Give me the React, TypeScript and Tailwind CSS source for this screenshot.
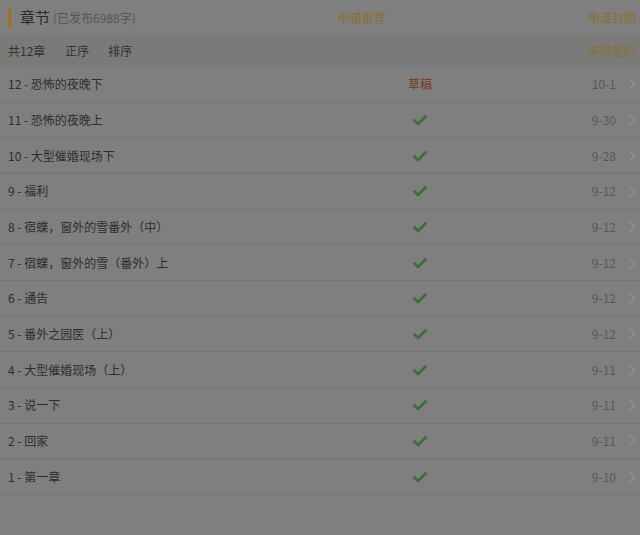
import React from "react";

const rows: { t: string; d: string; draft?: boolean }[] = [
  { t: "12 - 恐怖的夜晚下", d: "10-1", draft: true },
  { t: "11 - 恐怖的夜晚上", d: "9-30" },
  { t: "10 - 大型催婚现场下", d: "9-28" },
  { t: "9 - 福利", d: "9-12" },
  { t: "8 - 宿蝶，窗外的雪番外（中）", d: "9-12" },
  { t: "7 - 宿蝶，窗外的雪（番外）上", d: "9-12" },
  { t: "6 - 通告", d: "9-12" },
  { t: "5 - 番外之园医（上）", d: "9-12" },
  { t: "4 - 大型催婚现场（上）", d: "9-11" },
  { t: "3 - 说一下", d: "9-11" },
  { t: "2 - 回家", d: "9-11" },
  { t: "1 - 第一章", d: "9-10" },
];

const Check = () => (
  <svg width="14" height="12" viewBox="0 0 14 12">
    <path d="M1.5 6.5 L5 10 L12.5 2.5" fill="none" stroke="#3a6f3a" strokeWidth="2.8" strokeLinecap="round" strokeLinejoin="round" />
  </svg>
);

const Chevron = () => (
  <svg width="8" height="14" viewBox="0 0 8 14">
    <path d="M1.5 1.5 L6.5 7 L1.5 12.5" fill="none" stroke="#939393" strokeWidth="1.2" />
  </svg>
);

const gold = "text-[#8a7030]";

export default function App() {
  return (
    <div
      className="w-[640px] h-[535px] bg-[#7f7f7f] overflow-hidden text-[#2e2e2e]"
      style={{ fontFamily: '"Noto Sans CJK SC", Roboto, "Noto Sans", sans-serif' }}
    >
      <div className="h-[35px] flex items-center pl-[8px] pr-[4px] relative">
        <div className="w-[3px] h-[21px] bg-[#9a7522] mt-[1px]" />
        <span className="ml-[9px] text-[15px] text-[#2a2a2a]">章节</span>
        <span className="ml-[3px] text-[12px] text-[#555]">(已发布6988字)</span>
        <span className={`absolute left-[338px] top-[9px] text-[12px] ${gold}`}>申请推荐</span>
        <span className={`ml-auto text-[12px] ${gold}`}>申请封面</span>
      </div>
      <div className="h-[32px] bg-[#7a7a78] flex items-center pl-[8px] pr-[4px] text-[12px] text-[#333]">
        <span>共12章</span>
        <span className="ml-[20px]">正序</span>
        <span className="ml-[19px]">排序</span>
        <span className={`ml-auto ${gold}`}>申请签约</span>
      </div>
      <div>
        {rows.map((r, i) => (
          <div
            key={i}
            className="h-[35.67px] border-b border-[#767676] flex items-center pl-[8px] pr-[4px] text-[12px]"
          >
            <span className="w-[372px] text-[#2e2e2e]">{r.t}</span>
            <span className="w-[80px] flex justify-center">
              {r.draft ? <span className="text-[#7a3820]">草稿</span> : <Check />}
            </span>
            <span className="flex-1 text-right text-[#585858]">{r.d}</span>
            <span className="w-[20px] flex justify-end">
              <Chevron />
            </span>
          </div>
        ))}
      </div>
    </div>
  );
}
